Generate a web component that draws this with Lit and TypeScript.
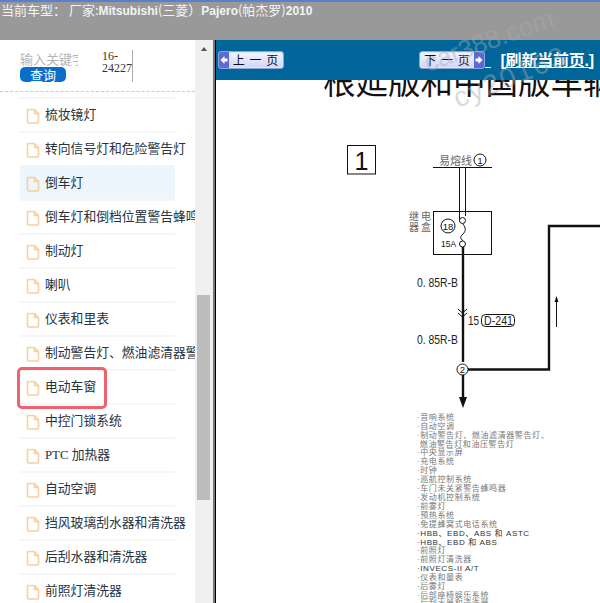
import { LitElement, html, css, svg } from "lit";
import { customElement } from "lit/decorators.js";

const ITEMS = ["梳妆镜灯","转向信号灯和危险警告灯","倒车灯","倒车灯和倒档位置警告蜂鸣器","制动灯","喇叭","仪表和里表","制动警告灯、燃油滤清器警告灯","电动车窗","中控门锁系统","PTC 加热器","自动空调","挡风玻璃刮水器和清洗器","后刮水器和清洗器","前照灯清洗器"];

const SYSTEMS: [string, number][] = [
  ["·音响系统",420],["·自动空调",429],["·制动警告灯、燃油滤清器警告灯、",438],[" 燃油警告灯和油压警告灯",446.5],["·中央显示屏",455],["·充电系统",464],["·时钟",473],["·巡航控制系统",482],["·车门未关紧警告蜂鸣器",491],["·发动机控制系统",500],["·前雾灯",509],["·预热系统",518],["·免提蜂窝式电话系统",527],["·HBB、EBD、ABS 和 ASTC",536],["·HBB、EBD 和 ABS",544.5],["·前照灯",553],["·前照灯清洗器",562],["·INVECS-II A/T",571],["·仪表和量表",580],["·后雾灯",589],["·后部座椅娱乐系统",598],["·后刮水器和清洗器",606],
];

@customElement("app-root")
export class AppRoot extends LitElement {
  static styles = css`
    :host { display: block; width: 600px; height: 603px; position: relative; overflow: hidden; background: #fff; font-family: "Noto Sans CJK SC", sans-serif; }
    .stripe { height: 2px; background: #5a7fd0; }
    .head { height: 38px; background: #999; color: #f4f4f4; font-size: 13px; line-height: 16px; white-space: nowrap; padding-left: 1px; }
    .head b { font-family: "Liberation Sans", sans-serif; font-size: 12px; }
    .main { display: flex; height: 563px; }
    .side { width: 195px; overflow: hidden; flex: none; background: #fff; display: flex; flex-direction: column; }
    .search { height: 52px; padding: 10px 0 0 20px; display: flex; flex: none; box-sizing: border-box; border-bottom: 1px dashed #ccc; }
    .search-l { width: 58px; flex: none; }
    .hint { width: 58px; overflow: hidden; white-space: nowrap; color: #b5b5b5; font-size: 13px; line-height: 17px; height: 17px; }
    .btn { width: 46px; height: 15px; background: #0b6fc9; border-radius: 5px; color: #fff; font-size: 13px; line-height: 15px; text-align: center; }
    .input { margin-left: 24px; width: 30px; height: 32px; border-right: 1px solid #aaa; font: 12px/12px "Liberation Serif", serif; color: #333; word-break: break-all; }
    .list { padding: 5px 0 0 20px; }
    .row { width: 155px; height: 34px; box-sizing: border-box; border-top: 2px solid #f6f6f6; display: flex; align-items: center; gap: 5px; padding-left: 6px; white-space: nowrap; font: 12.8px/16px "Liberation Serif", "Noto Sans CJK SC", serif; color: #27323e; }
    .row.on { background: #edf6fd; border-top-color: #edf6fd; }
    .row svg { flex: none; width: 14px; height: 16px; margin-top: 1px; }
    .scroll { width: 18px; flex: none; background: #f0f0f0; display: flex; flex-direction: column; align-items: center; }
    .up { width: 0; height: 0; border: 3.5px solid transparent; border-top: 0; border-bottom: 4px solid #555; margin: 7px 0 0 -1px; }
    .thumb { margin-top: 244px; width: 13px; height: 205px; background: #bcbcbc; margin-left: -1px; }
    .rule { width: 3px; flex: none; background: linear-gradient(90deg, #777 0 2px, #000 2px); }
    .view { flex: 1; min-width: 0; display: flex; flex-direction: column; }
    .bar { height: 40px; flex: none; background: #006699; display: flex; align-items: center; padding: 0 6px 0 2px; color: #fff; }
    .pg { width: 66px; height: 18px; box-sizing: border-box; border: 1px solid #8fa2e0; border-radius: 3px; background: linear-gradient(#f4f6ff, #cfd6f6); display: flex; align-items: center; color: #111; font: 12px/16px "Noto Sans CJK SC", sans-serif; overflow: hidden; box-shadow: 0 0 0 1px #dfe6fb inset; }
    .pg span { flex: 1; text-align: center; letter-spacing: 1px; white-space: pre; }
    .pg svg { width: 10px; height: 16px; flex: none; background: #5d68d8; }
    .gap { flex: 1; }
    .link { color: #fff; font: 700 16px/18px "Liberation Sans", "Noto Sans CJK SC", sans-serif; text-decoration: underline; white-space: nowrap; margin-top: 1px; letter-spacing: -.2px; }
    .tail { width: 6px; border-bottom: 1px solid #fff; height: 15px; margin-right: 9px; }
    .doc { flex: 1; overflow: hidden; }
    .doc svg { display: block; }
    .mark { position: absolute; left: 0; top: 0; pointer-events: none; }
    .hl { position: absolute; left: 17px; top: 367px; width: 90px; height: 42px; box-sizing: border-box; border: 3px solid #f0626f; border-radius: 5px; pointer-events: none; }
  `;

  private icon() {
    return html`<svg viewBox="0 0 14 16"><path d="M1.5 1.5h7l4 4v8a1.5 1.5 0 0 1-1.5 1.5H3a1.5 1.5 0 0 1-1.5-1.500z M8.5 1.500v4h4" fill="none" stroke="#f8cf9f" stroke-width="1.6" stroke-linejoin="round"/></svg>`;
  }

  private diagram() {
    const g = "#666", k = "#111";
    const zh = `"Noto Sans CJK SC", sans-serif`;
    return html`<svg width="384" height="523" viewBox="216 80 384 523">
      ${svg`
      <text x="323" y="94" font-size="32.500" font-family=${zh} fill="#111">根延版和中国版车辆</text>
      <rect x="347.500" y="145.500" width="28" height="28.500" fill="none" stroke=${k}/>
      <text x="361.500" y="170" text-anchor="middle" font-size="25" font-family="Liberation Sans" fill=${k}>1</text>
      <text x="439" y="165" font-size="11" font-family=${zh} fill=${g}>易熔线</text>
      <circle cx="480" cy="160" r="6" fill="none" stroke=${k}/>
      <text x="480" y="163.500" text-anchor="middle" font-size="9" font-family="Liberation Sans" fill=${k}>1</text>
      <path d="M433 167.500h59" stroke=${k} fill="none"/>
      <rect x="433.500" y="211.500" width="58" height="43" fill="#fff" stroke=${k}/>
      <path d="M459.500 167v54.500M465.500 167v49" stroke=${k} fill="none"/>
      <text x="409" y="220" font-size="10" letter-spacing="2" font-family=${zh} fill=${g}>继电</text>
      <text x="409" y="230.500" font-size="10" letter-spacing="2" font-family=${zh} fill=${g}>器盒</text>
      <circle cx="448" cy="226" r="7" fill="none" stroke=${k}/>
      <text x="448" y="229.500" text-anchor="middle" font-size="9.500" font-family="Liberation Sans" fill=${k}>18</text>
      <text x="441" y="247" font-size="9.500" font-family="Liberation Sans" textLength="15" lengthAdjust="spacingAndGlyphs" fill=${k}>15A</text>
      <circle cx="462.500" cy="220.500" r="3" fill="#fff" stroke=${k}/>
      <path d="M463 224c3 4 3 7 0 10s-3 4 0 7" fill="none" stroke=${k}/>
      <circle cx="462.500" cy="244" r="3" fill="#fff" stroke=${k}/>
      <path d="M463 247v115" stroke=${k} stroke-width="2.400"/>
      <text x="417" y="287" font-size="13" font-family="Liberation Sans" fill="#222" textLength="41" lengthAdjust="spacingAndGlyphs">0. 85R-B</text>
      <path d="M458 309l4.500 4 4.500-4M458 313l4.500 4 4.500-4" fill="none" stroke=${k}/>
      <text x="468" y="325" font-size="13" font-family="Liberation Sans" fill="#222" textLength="11" lengthAdjust="spacingAndGlyphs">15</text>
      <rect x="481.500" y="314.500" width="33" height="12" rx="4" fill="none" stroke=${k}/>
      <text x="484" y="325" font-size="13" font-family="Liberation Sans" fill="#222" textLength="29" lengthAdjust="spacingAndGlyphs">D-241</text>
      <text x="417" y="344" font-size="13" font-family="Liberation Sans" fill="#222" textLength="41" lengthAdjust="spacingAndGlyphs">0. 85R-B</text>
      <circle cx="462.500" cy="369.500" r="5.500" fill="#fff" stroke=${k}/>
      <text x="462.500" y="373" text-anchor="middle" font-size="9.500" font-family="Liberation Sans" fill=${k}>2</text>
      <path d="M468 369.500h81V226h51" fill="none" stroke=${k} stroke-width="2.400"/>
      <path d="M463 375v24" stroke=${k} stroke-width="2.400"/>
      <path d="M459 397h8l-4 11z" fill=${k}/>
      <path d="M556.500 327v-29" stroke=${k}/>
      <path d="M554.500 302l2-6 2 6z" fill=${k}/>
      ${SYSTEMS.map(([t, y]) => svg`<text x="417" y=${y} font-size="8" letter-spacing=".6" font-family=${`"Liberation Sans", "Noto Sans CJK SC", sans-serif`} fill=${/[A-Z]/.test(t) ? "#333" : "#777"} style="white-space:pre">${t}</text>`)}
      `}
    </svg>`;
  }

  render() {
    const arrow = (d: string) => html`<svg viewBox="0 0 10 16">${svg`<path d=${d} fill="#fff"/>`}</svg>`;
    return html`
      <div class="stripe"></div>
      <div class="head">当前车型：&nbsp;厂家:<b>Mitsubishi</b>(三菱）<b>Pajero</b>(帕杰罗)<b>2010</b></div>
      <div class="main">
        <div class="side">
          <div class="search">
            <div class="search-l">
              <div class="hint">输入关键字</div>
              <div class="btn">查询</div>
            </div>
            <div class="input">16-<br>24227</div>
          </div>
          <div class="list">
            ${ITEMS.map((t, i) => html`<div class="row ${i === 2 ? "on" : ""}">${this.icon()}<span>${t}</span></div>`)}
          </div>
        </div>
        <div class="scroll"><div class="up"></div><div class="thumb"></div></div>
        <div class="rule"></div>
        <div class="view">
          <div class="bar">
            <div class="pg">${arrow("M1.500 8l4-4v2.500h3v3h-3V12z")}<span>上 一 页</span></div>
            <div class="gap"></div>
            <div class="pg"><span>下 一 页</span>${arrow("M8.500 8l-4-4v2.500h-3v3h3V12z")}</div>
            <div class="tail"></div>
            <div class="link">[刷新当前页.]</div>
          </div>
          <div class="doc">${this.diagram()}</div>
        </div>
      </div>
      <div class="hl"></div>
      <svg class="mark" width="600" height="603" viewBox="0 0 600 603">
        <g font-family="Liberation Sans" fill="#aaa" fill-opacity=".45" font-size="26">
          <text transform="translate(428 72) rotate(-20)">car388.com</text>
          <text transform="translate(458 108) rotate(-22)" font-size="28" letter-spacing="2">cy20163</text>
        </g>
      </svg>
    `;
  }
}
